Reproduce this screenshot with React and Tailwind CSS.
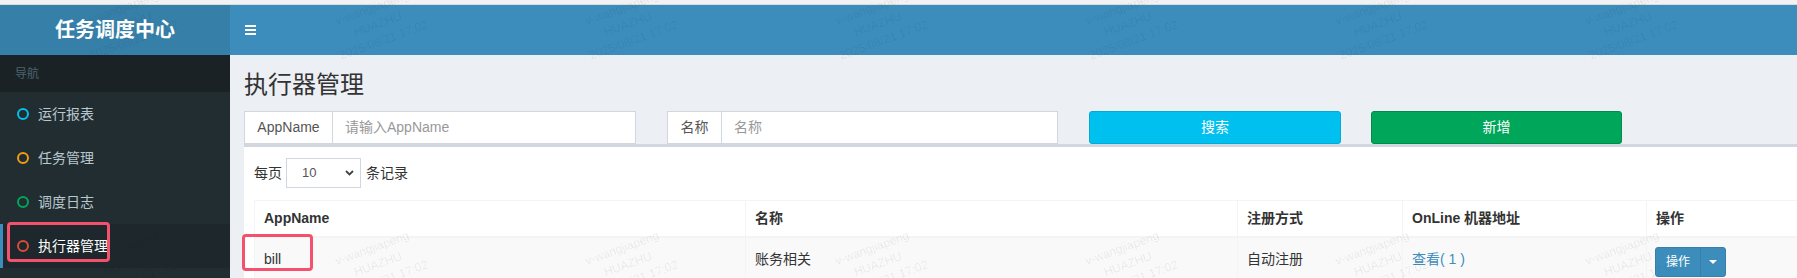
const menu = [
  { label: '运行报表', ring: 'border-[#00c0ef]' },
  { label: '任务管理', ring: 'border-[#f39c12]' },
  { label: '调度日志', ring: 'border-[#00a65a]' },
  { label: '执行器管理', ring: 'border-[#dd4b39]', active: true },
]

const cols = ['AppName', '名称', '注册方式', 'OnLine 机器地址', '操作']

// watermark grid: two rows, one column every 250px
const marks = []
for (const cy of [25, 265]) {
  for (let k = 0; k < 7; k++) marks.push({ x: 128 + 250 * k, y: cy })
}

function Watermarks() {
  return (
    <div className="pointer-events-none absolute inset-0 overflow-hidden">
      {marks.map((m) => (
        <div
          key={`${m.x}-${m.y}`}
          className="absolute w-[140px] -rotate-[20deg] text-center text-[12px] leading-[17px] text-[rgba(0,0,0,0.08)]"
          style={{ left: m.x - 70, top: m.y - 26 }}
        >
          <div>v-wangjiapeng</div>
          <div>HUAZHU</div>
          <div>2025/08/21 17:02</div>
        </div>
      ))}
    </div>
  )
}

function Sidebar() {
  return (
    <aside className="flex w-[230px] shrink-0 flex-col">
      <div className="flex h-[50px] items-center justify-center bg-[#367fa9] text-[20px] font-bold text-white">
        任务调度中心
      </div>
      <div className="flex h-[37px] items-center bg-[#1a2226] pl-[15px] text-[12px] text-[#4b646f]">导航</div>
      <ul className="flex-1 bg-[#222d32]">
        {menu.map((item) => (
          <li
            key={item.label}
            className={`flex h-[44px] items-center border-l-[3px] pl-[14px] text-[14px] ${
              item.active ? 'border-[#3c8dbc] bg-[#1e282c] text-white' : 'border-transparent text-[#b8c7ce]'
            }`}
          >
            <span className={`mr-[9px] h-[12px] w-[12px] rounded-full border-2 ${item.ring}`} />
            {item.label}
          </li>
        ))}
      </ul>
    </aside>
  )
}

function InputGroup({ label, placeholder, addonWidth, width }) {
  return (
    <div className={`flex h-[33px] ${width} border border-[#d2d6de] bg-white text-[14px]`}>
      <div className={`flex ${addonWidth} items-center justify-center border-r border-[#d2d6de] text-[#555]`}>{label}</div>
      <div className="flex flex-1 items-center px-3 text-[#999]">{placeholder}</div>
    </div>
  )
}

export default function App() {
  return (
    <div className="relative h-[278px] w-[1797px] overflow-hidden bg-[#ecf0f5] font-['Liberation_Sans','Noto_Sans_CJK_SC',sans-serif]">
      <div className="h-[5px] border-b border-[#dcdcdc] bg-[#f2f2f2]" />
      <div className="flex h-[273px]">
        <Sidebar />
        <main className="flex min-w-0 flex-1 flex-col">
          <header className="flex h-[50px] shrink-0 items-center bg-[#3c8dbc] pl-[15px]">
            <div className="flex w-[11px] flex-col gap-[2px]">
              <span className="h-[2px] bg-white" />
              <span className="h-[2px] bg-white" />
              <span className="h-[2px] bg-white" />
            </div>
          </header>
          <div className="flex-1 overflow-hidden pl-[14px]">
            <h1 className="mt-[17px] h-[26px] text-[24px] leading-[26px] text-[#333]">执行器管理</h1>
            <div className="mt-[13px] flex items-center">
              <InputGroup label="AppName" placeholder="请输入AppName" addonWidth="w-[88px]" width="w-[392px]" />
              <div className="ml-[31px]">
                <InputGroup label="名称" placeholder="名称" addonWidth="w-[54px]" width="w-[391px]" />
              </div>
              <button className="ml-[31px] flex h-[33px] w-[252px] items-center justify-center rounded-[3px] border border-[#00acd6] bg-[#00c0ef] text-[14px] text-white">
                搜索
              </button>
              <button className="ml-[30px] flex h-[33px] w-[251px] items-center justify-center rounded-[3px] border border-[#008d4c] bg-[#00a65a] text-[14px] text-white">
                新增
              </button>
            </div>
            <section className="w-[1580px] border-t-[3px] border-[#d2d6de] bg-white px-[10px] pt-[11px]">
              <div className="flex items-center text-[14px] text-[#333]">
                <span>每页</span>
                <div className="ml-[4px] mr-[5px] flex h-[30px] w-[75px] items-center justify-between border border-[#d2d6de] pl-[15px] pr-[6px] text-[13px] text-[#555]">
                  <span>10</span>
                  <svg width="9" height="6" viewBox="0 0 9 6" fill="none">
                    <path d="M1 1l3.5 3.5L8 1" stroke="#444" strokeWidth="1.8" />
                  </svg>
                </div>
                <span>条记录</span>
              </div>
              <div className="mt-[12px] border border-[#f4f4f4] text-[14px] text-[#333]">
                <div className="grid grid-cols-[490px_492px_165px_244px_1fr] border-b-2 border-[#f4f4f4]">
                  {cols.map((c, i) => (
                    <div
                      key={c}
                      className={`flex h-[35px] items-center pl-[9px] font-bold ${i ? 'border-l border-[#f4f4f4]' : ''}`}
                    >
                      {c}
                    </div>
                  ))}
                </div>
                <div className="grid h-[46px] grid-cols-[490px_492px_165px_244px_1fr] bg-[#f9f9f9]">
                  <div className="pl-[9px] pt-[11px]">bill</div>
                  <div className="border-l border-[#f4f4f4] pl-[9px] pt-[11px]">账务相关</div>
                  <div className="border-l border-[#f4f4f4] pl-[9px] pt-[11px]">自动注册</div>
                  <div className="border-l border-[#f4f4f4] pl-[9px] pt-[11px] text-[#3c8dbc]">查看( 1 )</div>
                  <div className="border-l border-[#f4f4f4] pl-[8px] pt-[9px]">
                    <div className="flex h-[30px] w-[71px] overflow-hidden rounded-[3px] border border-[#367fa9] bg-[#3c8dbc] text-[12px] text-white">
                      <span className="flex w-[45px] items-center justify-center border-r border-[#367fa9]">操作</span>
                      <span className="flex flex-1 items-center justify-center">
                        <svg width="8" height="4" viewBox="0 0 8 4">
                          <path d="M0 0h8L4 4z" fill="white" />
                        </svg>
                      </span>
                    </div>
                  </div>
                </div>
              </div>
            </section>
          </div>
        </main>
      </div>
      <Watermarks />
      <div className="pointer-events-none absolute left-[7px] top-[222px] h-[40px] w-[103px] rounded-[4px] border-[3px] border-[#f4516c]" />
      <div className="pointer-events-none absolute left-[242px] top-[234px] h-[37px] w-[71px] rounded-[4px] border-[3px] border-[#f4516c]" />
    </div>
  )
}
